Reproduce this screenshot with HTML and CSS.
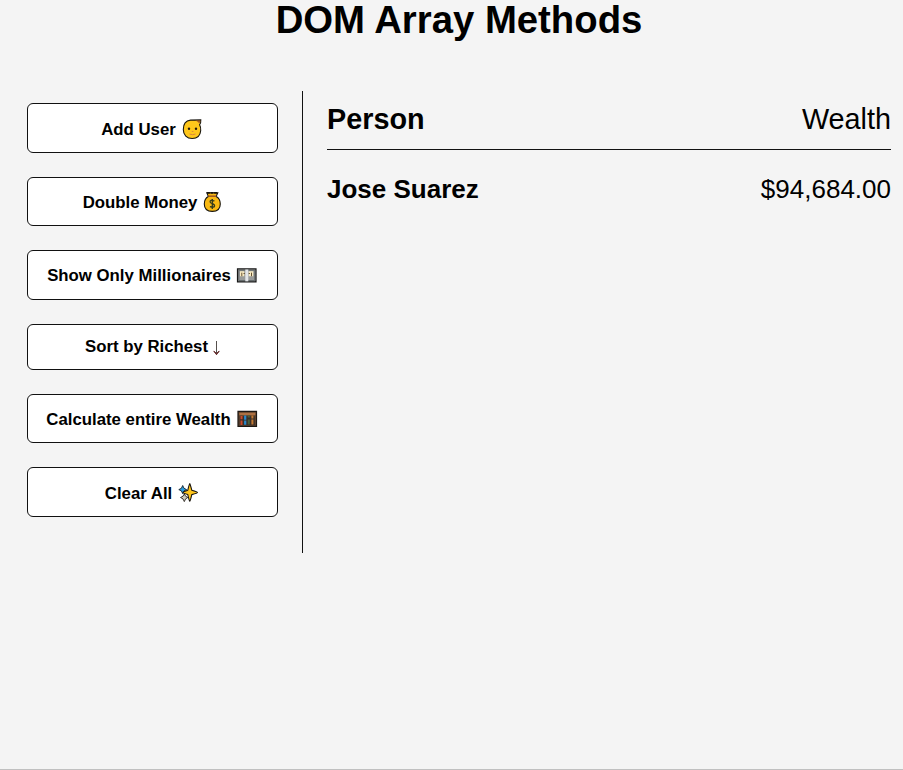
FILE: index.html
```html
<!DOCTYPE html>
<html lang="en">
<head>
<meta charset="utf-8">
<title>DOM Array Methods</title>
<link rel="stylesheet" href="styles.css">
</head>
<body>
<h1>DOM Array Methods</h1>
<div class="container">
  <aside>
    <button class="tall low"><span>Add User</span>
      <svg class="icon" viewBox="0 0 23 22"><path d="M2.3 11.5C2.3 5.5 5 2.6 9.5 2.1L19.8 1.9C20 4.5 19.4 5.8 18.6 6.7C19.6 8.5 20 10 19.7 12.7C19.2 18 16 20.5 11.2 20.5C5.9 20.5 2.3 17 2.3 11.5Z" fill="#ffc71b" stroke="#161410" stroke-width="1.1"/><path d="M14 2.6L19.4 2.4Q19.3 4.3 18.2 5.2Q16.5 3.4 14 2.6Z" fill="#a65b23"/><circle cx="8" cy="10.8" r="1.2" fill="#251a0c"/><circle cx="15" cy="10.8" r="1.2" fill="#251a0c"/><path d="M8.5 16Q11.5 17.4 14.5 16M10.8 13.5h1.6" fill="none" stroke="#d8863f" stroke-width="1"/></svg>
    </button>
    <button class="low money"><span>Double Money</span>
      <svg class="icon" viewBox="0 0 23 22"><path d="M6.3 5.4L4.8 1.8H15.8L14.2 5.4Q18.3 7.5 18.3 13Q18.3 20.4 10.3 20.4Q2.3 20.4 2.3 13Q2.3 7.5 6.3 5.4Z" fill="#f9b912" stroke="#15130f" stroke-width="1.1"/><path d="M4.9 1.8H15.7" stroke="#15130f" stroke-width="1.8" stroke-dasharray="3 .6"/><path d="M6.3 5.2h8" stroke="#9b5522" stroke-width="1.5"/><path d="M12.5 10Q7.9 8.3 8.1 11Q8.3 12.2 10.3 12.7Q12.7 13.4 12.5 15Q12.1 17 7.9 15.7M10.3 8v10" fill="none" stroke="#333b1e" stroke-width="1.3"/></svg>
    </button>
    <button class="tall bill"><span>Show Only Millionaires</span>
      <svg class="icon" viewBox="0 0 23 22"><path d="M1.5 3.9h18.5v13H1.5z" fill="#999b9a" stroke="#171717" stroke-width="1.2"/><path d="M2.8 5.2h16v10.4h-16z" fill="none" stroke="#626768" stroke-width="1"/><path d="M4 6.2h4.2v5H4zM12.7 6.2h4.5v5h-4.5z" fill="#f8eac0"/><path d="M9.3 4.5h3v11.8h-3z" fill="#e4e6e9"/><path d="M5.8 7.7v3.5M15.5 7.7v3.5M7.5 8.5h1.4M12.7 8.5h1.2" stroke="#665132" stroke-width="1"/></svg>
    </button>
    <button class="short"><span>Sort by Richest</span>
      <svg class="arrow" viewBox="0 0 9 18"><path d="M3.5 1v12" fill="none" stroke="#55504d" stroke-width="1"/><path d="M.8 11.3Q2.8 12 3.5 14.6Q4.2 12 6.2 11.3L3.5 14.2Z" fill="#571b1b" stroke="#571b1b" stroke-width="1"/></svg>
    </button>
    <button class="low"><span>Calculate entire Wealth</span>
      <svg class="icon" viewBox="0 0 23 22"><path d="M2 3.3h18.5v15H2z" fill="#65472f" stroke="#1c1713" stroke-width="1.2"/><path d="M3.3 4.8h16v2.3h-16z" fill="#ad7042"/><path d="M3.6 8.2h15.2v9H3.6z" fill="#392f29"/><path d="M5.5 8v3.2M5.5 12.5v4.5" stroke="#cf4928" stroke-width="2"/><path d="M9.2 7.5v4.2M9.2 12.6v4.2" stroke="#278acf" stroke-width="2.2"/><path d="M12.8 7.5v2M12.8 11.5v5" stroke="#49613d" stroke-width="2"/><path d="M16.4 7.5v3M16.4 11.5v5" stroke="#c57930" stroke-width="2"/></svg>
    </button>
    <button class="tall low"><span>Clear All</span>
      <svg class="icon" viewBox="0 0 23 22"><path d="M5.7 3.5L7 6.3L9.6 7.6L7 8.9L5.7 11.7L4.4 8.9L1.8 7.6L4.4 6.3Z" fill="#2a9de0" stroke="#17232b" stroke-width=".9"/><path d="M7.3 12L8.6 14.2L10.8 15.5L8.6 16.9L7.3 19.6L6 16.9L3.5 15.5L6 14.2Z" fill="#d1cbbb" stroke="#29251f" stroke-width=".9"/><path d="M12.8 1.7Q13.2 2 14.8 8.2Q20.5 9.9 20.5 10.5Q20.5 11.1 14.8 12.6Q13.3 19 12.8 19.2Q12.2 19 10.8 12.6Q6 11.1 6 10.5Q6 9.9 10.8 8.2Q12.2 2 12.8 1.7Z" fill="#ffc51b" stroke="#18150f" stroke-width="1.1"/></svg>
    </button>
  </aside>
  <main>
    <h2><strong>Person</strong><span>Wealth</span></h2>
    <div class="person"><strong>Jose Suarez</strong><span>$94,684.00</span></div>
  </main>
</div>
</body>
</html>
```
FILE: styles.css
```css
* { box-sizing: border-box; }

body {
  margin: 0;
  height: 770px;
  background: #f4f4f4;
  border-bottom: 1px solid #c0c0c0;
  color: #000;
  font-family: Arial, "Liberation Sans", sans-serif;
}

h1 {
  margin: 0 0 51px;
  padding-left: 15px;
  height: 40px;
  line-height: 40px;
  font-size: 38.3px;
  text-align: center;
}

.container {
  display: flex;
  height: 462px;
  padding: 0 12px 0 27px;
}

aside {
  display: flex;
  flex-direction: column;
  gap: 24px;
  width: 276px;
  padding: 12px 24px 0 0;
  border-right: 1px solid #111;
}

button {
  display: flex;
  align-items: center;
  justify-content: center;
  gap: 5px;
  width: 251px;
  height: 49px;
  padding: 1px 0 0;
  border: 1px solid #111;
  border-radius: 6px;
  background: #fff;
  color: #000;
  font: bold 16.8px/20px Arial, "Liberation Sans", sans-serif;
  white-space: nowrap;
}

.tall { height: 50px; }
.short { height: 46px; padding: 0 0 0 2px; }
.low span { padding-top: 2px; }
.money { padding-left: 3px; }
.bill { padding-left: 1px; }
.icon { flex: none; width: 23px; height: 22px; }
.arrow { flex: none; width: 9px; height: 18px; margin-top: 3px; }

main {
  flex: 1;
  padding: 12px 0 0 24px;
}

h2, .person {
  display: flex;
  justify-content: space-between;
}

h2 {
  height: 47px;
  margin: 0 0 24px;
  border-bottom: 1px solid #111;
  font-size: 28.8px;
  font-weight: normal;
  line-height: 33px;
}

.person {
  font-size: 26px;
  line-height: 30px;
}
```
